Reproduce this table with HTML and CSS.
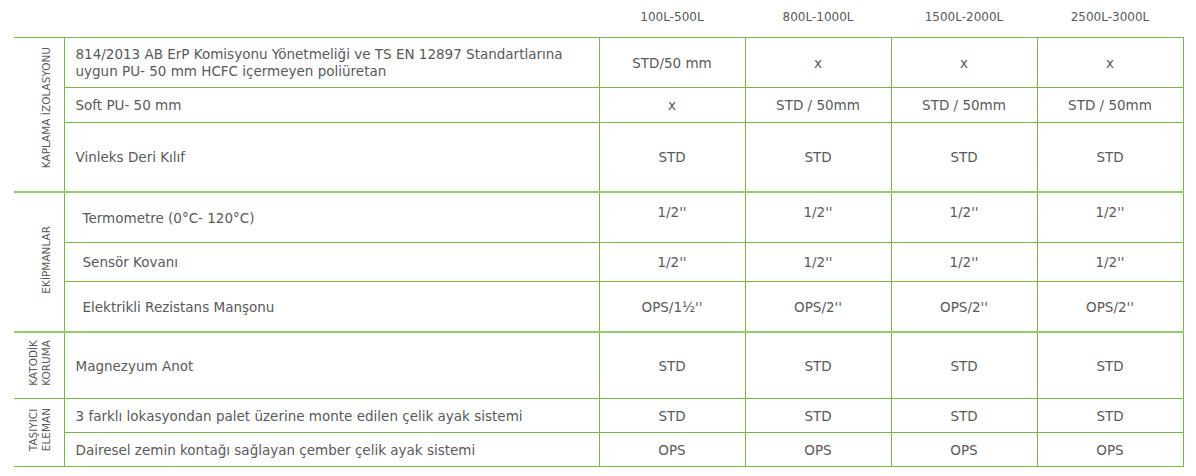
FILE: index.html
```html
<!DOCTYPE html>
<html lang="tr">
<head>
<meta charset="utf-8">
<title>Teknik Özellikler</title>
<link rel="stylesheet" href="styles.css">
</head>
<body>
<table class="spec">
  <colgroup>
    <col class="c-label">
    <col class="c-desc">
    <col class="c-val">
    <col class="c-val">
    <col class="c-val">
    <col class="c-val">
  </colgroup>
  <thead>
    <tr class="h-row">
      <th></th>
      <th></th>
      <th>100L-500L</th>
      <th>800L-1000L</th>
      <th>1500L-2000L</th>
      <th>2500L-3000L</th>
    </tr>
  </thead>
  <tbody class="grp first">
    <tr class="r1">
      <td class="lbl up" rowspan="3"><span class="vt">KAPLAMA İZOLASYONU</span></td>
      <td class="desc">814/2013 AB ErP Komisyonu Yönetmeliği ve TS EN 12897 Standartlarına<br>uygun PU- 50 mm HCFC içermeyen poliüretan</td>
      <td>STD/50 mm</td><td>x</td><td>x</td><td>x</td>
    </tr>
    <tr class="r2">
      <td class="desc">Soft PU- 50 mm</td>
      <td>x</td><td>STD / 50mm</td><td>STD / 50mm</td><td>STD / 50mm</td>
    </tr>
    <tr class="r3">
      <td class="desc">Vinleks Deri Kılıf</td>
      <td>STD</td><td>STD</td><td>STD</td><td>STD</td>
    </tr>
  </tbody>
  <tbody class="grp sect">
    <tr class="r4">
      <td class="lbl" rowspan="3"><span class="vt">EKİPMANLAR</span></td>
      <td class="desc deep">Termometre (0°C- 120°C)</td>
      <td class="hi">1/2''</td><td class="hi">1/2''</td><td class="hi">1/2''</td><td class="hi">1/2''</td>
    </tr>
    <tr class="r5">
      <td class="desc deep">Sensör Kovanı</td>
      <td>1/2''</td><td>1/2''</td><td>1/2''</td><td>1/2''</td>
    </tr>
    <tr class="r6">
      <td class="desc deep">Elektrikli Rezistans Manşonu</td>
      <td>OPS/1½''</td><td>OPS/2''</td><td>OPS/2''</td><td>OPS/2''</td>
    </tr>
  </tbody>
  <tbody class="grp sect">
    <tr class="r7">
      <td class="lbl"><span class="vt">KATODİK<br>KORUMA</span></td>
      <td class="desc">Magnezyum Anot</td>
      <td>STD</td><td>STD</td><td>STD</td><td>STD</td>
    </tr>
  </tbody>
  <tbody class="grp">
    <tr class="r8">
      <td class="lbl" rowspan="2"><span class="vt">TAŞIYICI<br>ELEMAN</span></td>
      <td class="desc">3 farklı lokasyondan palet üzerine monte edilen çelik ayak sistemi</td>
      <td>STD</td><td>STD</td><td>STD</td><td>STD</td>
    </tr>
    <tr class="r9">
      <td class="desc">Dairesel zemin kontağı sağlayan çember çelik ayak sistemi</td>
      <td>OPS</td><td>OPS</td><td>OPS</td><td>OPS</td>
    </tr>
  </tbody>
</table>
</body>
</html>
```

FILE: styles.css
```css
html, body {
  margin: 0;
  padding: 0;
  background: #ffffff;
}

body {
  font-family: "DejaVu Sans", "Liberation Sans", sans-serif;
  color: #58595b;
}

.spec {
  margin-left: 14px;
  width: 1169px;
  table-layout: fixed;
  border-collapse: collapse;
  font-size: 13.5px;
}

.c-label { width: 50px; }
.c-desc { width: 535px; }
.c-val { width: 146px; }

.h-row { height: 37px; }

.h-row th {
  font-weight: normal;
  font-size: 12px;
  color: #58595b;
  text-align: center;
  vertical-align: middle;
  padding: 0 0 2px 0;
  border: none;
}

.spec td {
  border: 1px solid #74b943;
  padding: 2px 0 0 0;
  text-align: center;
  vertical-align: middle;
  line-height: 17px;
}

.spec td.lbl {
  border-left: none;
  text-align: right;
  padding: 0 11px 0 0;
}

.spec td.lbl.up {
  padding-bottom: 10px;
}

.spec td.desc {
  text-align: left;
  padding-left: 11px;
}

.spec td.desc.deep {
  padding-left: 18px;
}

.spec td.hi {
  padding: 0 0 10px 0;
}

.grp.sect tr:first-child td {
  border-top: 2px solid #95cb6c;
}

.vt {
  display: inline-block;
  writing-mode: vertical-rl;
  transform: rotate(180deg);
  font-size: 10.5px;
  line-height: 13px;
  text-align: center;
  color: #58595b;
}

.r1 { height: 50px; }
.r2 { height: 35px; }
.r3 { height: 70px; }
.r4 { height: 50px; }
.r5 { height: 39px; }
.r6 { height: 51px; }
.r7 { height: 66px; }
.r8 { height: 34px; }
.r9 { height: 34px; }
```
